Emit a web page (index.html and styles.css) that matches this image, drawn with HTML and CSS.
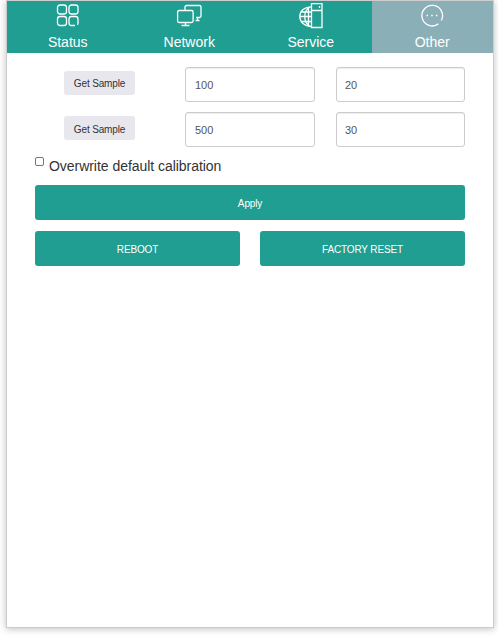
FILE: index.html
```html
<!DOCTYPE html>
<html lang="en">
<head>
<meta charset="utf-8">
<title>Calibration</title>
<link rel="stylesheet" href="styles.css">
</head>
<body>
<main class="panel">
  <nav class="tabs">
    <a class="tab">
      <svg class="icon" viewBox="0 0 24 24"><rect x="1.5" y="2" width="9" height="9" rx="2.5"/><rect x="13" y="2" width="9" height="9" rx="2.5"/><rect x="1.5" y="13.500" width="9" height="9" rx="2.5"/><path d="M19 22.500h-3.500a2.500 2.500 0 0 1-2.500-2.500v-4a2.500 2.500 0 0 1 2.500-2.500h4a2.500 2.500 0 0 1 2.500 2.500v4q0 1-.7 1.700"/></svg>
      <span>Status</span>
    </a>
    <a class="tab">
      <svg class="icon" viewBox="0 0 24 24"><path d="M8 7V4q0-1.500 1.500-1.500h13q1.500 0 1.500 1.500v9q0 1.500-1.500 1.500H19M20.500 14.500v2.500M18.500 17.500h4"/><rect x="0.600" y="7.500" width="15.500" height="12" rx="1.500"/><path d="M8.500 19.500v3M4.500 22.500h8"/></svg>
      <span>Network</span>
    </a>
    <a class="tab">
      <svg class="icon" viewBox="0 0 24 24"><path d="M12.500.7h10.500v23.800H12.500zM12.500 7.500h10.500M20.500 3v2M12.500 3.800C5.500 3.500.8 8 .8 13.500s4.700 10 11.700 10M11 4C4 8 4 19 11 23.500M9.500 4v19M2.500 9h10M.8 13.500h11.700M2.500 18.500h10"/></svg>
      <span>Service</span>
    </a>
    <a class="tab tab-active">
      <svg class="icon" viewBox="0 0 24 24"><path d="M18.500 20.800A10.300 10.300 0 1 1 21.300 17.500"/><path class="dots" d="M6.500 12.500h1.500M11.200 12.500h1.500M15.900 12.500h1.500"/></svg>
      <span>Other</span>
    </a>
  </nav>
  <form class="content">
    <div class="row">
      <button class="sample" type="button">Get Sample</button>
      <input class="field field-raw" type="text" value="100">
      <input class="field field-real" type="text" value="20">
    </div>
    <div class="row row-second">
      <button class="sample" type="button">Get Sample</button>
      <input class="field field-raw" type="text" value="500">
      <input class="field field-real" type="text" value="30">
    </div>
    <label class="overwrite"><input class="box" type="checkbox"><span>Overwrite default calibration</span></label>
    <button class="action" type="button">Apply</button>
    <div class="pair">
      <button class="action" type="button">REBOOT</button>
      <button class="action" type="button">FACTORY RESET</button>
    </div>
  </form>
</main>
</body>
</html>
```
FILE: styles.css
```css
* { box-sizing: border-box; }
body {
  display: flow-root;
  min-height: 636px;
  margin: 0;
  background: #fff;
  color: #333;
  font-family: "Liberation Sans", Arial, sans-serif;
  font-size: 14px;
}
.panel {
  width: 488px;
  height: 628px;
  margin: 0 0 0 6px;
  border: 1px solid #ccc;
  box-shadow: 0 1px 7px rgba(0, 0, 0, .25);
}
.tabs {
  display: grid;
  grid-template-columns: repeat(4, 1fr);
  height: 52px;
  background: #219e92;
}
.tab {
  display: flex;
  flex-direction: column;
  align-items: center;
  padding-top: 2px;
  color: #fff;
  line-height: 20px;
}
.tab span { margin-top: 5px; }
.tab-active { background: #8aafb7; }
.icon {
  width: 24px;
  height: 24px;
  overflow: visible;
  fill: none;
  stroke: #fff;
  stroke-width: 1.3;
}
.dots { stroke-width: 1.5; }
.content { padding: 14px 28px 0; }
.row {
  display: flex;
  align-items: flex-start;
  height: 35px;
}
.row-second { margin-top: 10px; }
button {
  border: 0;
  border-radius: 3px;
  font: 10px "Liberation Sans", Arial, sans-serif;
  letter-spacing: -.15px;
}
.sample {
  width: 71px;
  height: 24px;
  margin: 4px 50px 0 29px;
  padding: 1px 0 0;
  background: #e8e7ed;
  color: #333;
}
.row-second .sample { padding-top: 2px; }
.field {
  height: 35px;
  padding: 1px 9px 0;
  border: 1px solid #ccc;
  border-radius: 3px;
  box-shadow: inset 0 1px 1px rgba(0, 0, 0, .075);
  background: #fff;
  color: #555;
  font: 11px "Liberation Sans", Arial, sans-serif;
}
.field-raw { width: 130px; }
.field-real { width: 129px; margin-left: 21px; padding-left: 8px; }
.overwrite {
  display: flex;
  height: 38px;
  padding-top: 9px;
  line-height: 20px;
  letter-spacing: -.04px;
}
.box {
  appearance: none;
  width: 9px;
  height: 9px;
  margin: 1px 5px 0 0;
  border: 1px solid #767676;
  border-radius: 2px;
  background: #fff;
}
.action {
  width: 100%;
  height: 35px;
  padding: 2px 0 0;
  background: #219e92;
  color: #fff;
}
.action, .sample { display: block; }
.pair {
  display: grid;
  grid-template-columns: 1fr 1fr;
  gap: 20px;
  margin-top: 11px;
}
```
